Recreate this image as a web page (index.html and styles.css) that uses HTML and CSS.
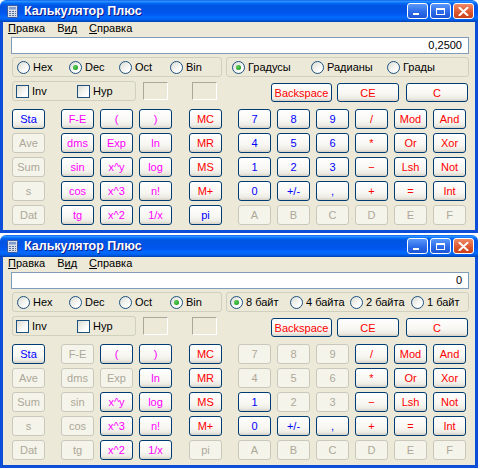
FILE: index.html
```html
<!DOCTYPE html>
<html>
<head>
<meta charset="utf-8">
<link rel="stylesheet" href="styles.css">
</head>
<body>
<div class="win">
  <div class="title">
    <svg class="appicon" width="11" height="13" viewBox="0 0 11 13"><rect x="0.5" y="0.5" width="10" height="12" rx="1" fill="#D8DEEA" stroke="#3A5A9A"/><rect x="2" y="2" width="7" height="2.5" fill="#7F9ACC"/><g fill="#5A6E9A"><rect x="2" y="6" width="2" height="1"/><rect x="5" y="6" width="2" height="1"/><rect x="8" y="6" width="1" height="1"/><rect x="2" y="8" width="2" height="1"/><rect x="5" y="8" width="2" height="1"/><rect x="8" y="8" width="1" height="1"/><rect x="2" y="10" width="2" height="1"/><rect x="5" y="10" width="2" height="1"/><rect x="8" y="10" width="1" height="1"/></g></svg>
    <span class="ttext">Калькулятор Плюс</span>
    <div class="tbtns">
      <span class="tb min"><i></i></span>
      <span class="tb max"><i></i></span>
      <span class="tb close"><svg width="11" height="9" viewBox="0 0 11 9"><path d="M1.5 0.8 L9.5 8.2 M9.5 0.8 L1.5 8.2" stroke="#fff" stroke-width="2" stroke-linecap="round"/></svg></span>
    </div>
  </div>
  <div class="body">
    <div class="menu"><span><u>П</u>равка</span><span>В<u>и</u>д</span><span><u>С</u>правка</span></div>
    <div class="display">0,2500</div>
    <div class="row1">
      <div class="gbox base">
        <span class="radio w52"><i class="rb"></i>Hex</span>
        <span class="radio w50"><i class="rb on"></i>Dec</span>
        <span class="radio w51"><i class="rb"></i>Oct</span>
        <span class="radio"><i class="rb"></i>Bin</span>
      </div>
      <div class="gbox angle">
        <span class="radio w79"><i class="rb on"></i>Градусы</span>
        <span class="radio w76"><i class="rb"></i>Радианы</span>
        <span class="radio"><i class="rb"></i>Грады</span>
      </div>
    </div>
    <div class="row2">
      <div class="gbox invhyp">
        <span class="chk w61"><i class="cb"></i>Inv</span>
        <span class="chk"><i class="cb"></i>Hyp</span>
      </div>
      <span class="sunk s1"></span>
      <span class="sunk s2"></span>
      <div class="k r bksp">Backspace</div>
      <div class="k r ce">CE</div>
      <div class="k r cc">C</div>
    </div>
    <div class="keys">
      <div class="g g1">
        <div class="k b">Sta</div>
        <div class="k d">Ave</div>
        <div class="k d">Sum</div>
        <div class="k d">s</div>
        <div class="k d">Dat</div>
      </div>
      <div class="g g2">
        <div class="k m">F-E</div><div class="k m">(</div><div class="k m">)</div>
        <div class="k m">dms</div><div class="k m">Exp</div><div class="k m">ln</div>
        <div class="k m">sin</div><div class="k m">x^y</div><div class="k m">log</div>
        <div class="k m">cos</div><div class="k m">x^3</div><div class="k m">n!</div>
        <div class="k m">tg</div><div class="k m">x^2</div><div class="k m">1/x</div>
      </div>
      <div class="g g3">
        <div class="k r">MC</div>
        <div class="k r">MR</div>
        <div class="k r">MS</div>
        <div class="k r">M+</div>
        <div class="k b">pi</div>
      </div>
      <div class="g g4">
        <div class="k b">7</div><div class="k b">8</div><div class="k b">9</div><div class="k r">/</div><div class="k r">Mod</div><div class="k r">And</div>
        <div class="k b">4</div><div class="k b">5</div><div class="k b">6</div><div class="k r">*</div><div class="k r">Or</div><div class="k r">Xor</div>
        <div class="k b">1</div><div class="k b">2</div><div class="k b">3</div><div class="k r">−</div><div class="k r">Lsh</div><div class="k r">Not</div>
        <div class="k b">0</div><div class="k b">+/-</div><div class="k b">,</div><div class="k r">+</div><div class="k r">=</div><div class="k r">Int</div>
        <div class="k d">A</div><div class="k d">B</div><div class="k d">C</div><div class="k d">D</div><div class="k d">E</div><div class="k d">F</div>
      </div>
    </div>
  </div>
</div>

<div class="win win2">
  <div class="title">
    <svg class="appicon" width="11" height="13" viewBox="0 0 11 13"><rect x="0.5" y="0.5" width="10" height="12" rx="1" fill="#D8DEEA" stroke="#3A5A9A"/><rect x="2" y="2" width="7" height="2.5" fill="#7F9ACC"/><g fill="#5A6E9A"><rect x="2" y="6" width="2" height="1"/><rect x="5" y="6" width="2" height="1"/><rect x="8" y="6" width="1" height="1"/><rect x="2" y="8" width="2" height="1"/><rect x="5" y="8" width="2" height="1"/><rect x="8" y="8" width="1" height="1"/><rect x="2" y="10" width="2" height="1"/><rect x="5" y="10" width="2" height="1"/><rect x="8" y="10" width="1" height="1"/></g></svg>
    <span class="ttext">Калькулятор Плюс</span>
    <div class="tbtns">
      <span class="tb min"><i></i></span>
      <span class="tb max"><i></i></span>
      <span class="tb close"><svg width="11" height="9" viewBox="0 0 11 9"><path d="M1.5 0.8 L9.5 8.2 M9.5 0.8 L1.5 8.2" stroke="#fff" stroke-width="2" stroke-linecap="round"/></svg></span>
    </div>
  </div>
  <div class="body">
    <div class="menu"><span><u>П</u>равка</span><span>В<u>и</u>д</span><span><u>С</u>правка</span></div>
    <div class="display">0</div>
    <div class="row1">
      <div class="gbox base">
        <span class="radio w52"><i class="rb"></i>Hex</span>
        <span class="radio w50"><i class="rb"></i>Dec</span>
        <span class="radio w51"><i class="rb"></i>Oct</span>
        <span class="radio"><i class="rb on"></i>Bin</span>
      </div>
      <div class="gbox bytes">
        <span class="radio w60"><i class="rb on"></i>8 байт</span>
        <span class="radio w60"><i class="rb"></i>4 байта</span>
        <span class="radio w61"><i class="rb"></i>2 байта</span>
        <span class="radio"><i class="rb"></i>1 байт</span>
      </div>
    </div>
    <div class="row2">
      <div class="gbox invhyp">
        <span class="chk w61"><i class="cb"></i>Inv</span>
        <span class="chk"><i class="cb"></i>Hyp</span>
      </div>
      <span class="sunk s1"></span>
      <span class="sunk s2"></span>
      <div class="k r bksp">Backspace</div>
      <div class="k r ce">CE</div>
      <div class="k r cc">C</div>
    </div>
    <div class="keys">
      <div class="g g1">
        <div class="k b">Sta</div>
        <div class="k d">Ave</div>
        <div class="k d">Sum</div>
        <div class="k d">s</div>
        <div class="k d">Dat</div>
      </div>
      <div class="g g2">
        <div class="k d">F-E</div><div class="k m">(</div><div class="k m">)</div>
        <div class="k d">dms</div><div class="k d">Exp</div><div class="k m">ln</div>
        <div class="k d">sin</div><div class="k m">x^y</div><div class="k m">log</div>
        <div class="k d">cos</div><div class="k m">x^3</div><div class="k m">n!</div>
        <div class="k d">tg</div><div class="k m">x^2</div><div class="k m">1/x</div>
      </div>
      <div class="g g3">
        <div class="k r">MC</div>
        <div class="k r">MR</div>
        <div class="k r">MS</div>
        <div class="k r">M+</div>
        <div class="k d">pi</div>
      </div>
      <div class="g g4">
        <div class="k d">7</div><div class="k d">8</div><div class="k d">9</div><div class="k r">/</div><div class="k r">Mod</div><div class="k r">And</div>
        <div class="k d">4</div><div class="k d">5</div><div class="k d">6</div><div class="k r">*</div><div class="k r">Or</div><div class="k r">Xor</div>
        <div class="k b">1</div><div class="k d">2</div><div class="k d">3</div><div class="k r">−</div><div class="k r">Lsh</div><div class="k r">Not</div>
        <div class="k b">0</div><div class="k b">+/-</div><div class="k b">,</div><div class="k r">+</div><div class="k r">=</div><div class="k r">Int</div>
        <div class="k d">A</div><div class="k d">B</div><div class="k d">C</div><div class="k d">D</div><div class="k d">E</div><div class="k d">F</div>
      </div>
    </div>
  </div>
</div>
</body>
</html>
```
FILE: styles.css
```css
html, body {
  margin: 0;
  padding: 0;
  background: #ffffff;
}
body {
  font-family: "Liberation Sans", Arial, sans-serif;
  font-size: 11px;
  color: #000;
}
.win {
  width: 478px;
  height: 233px;
  display: flex;
  flex-direction: column;
}
.win2 {
  margin-top: 2px;
}
.title {
  flex: none;
  height: 22px;
  display: flex;
  align-items: center;
  border-radius: 6px 6px 0 0;
  background: linear-gradient(to bottom, #0058EE 0%, #3593FF 5%, #288EFF 8%, #127DFF 11%, #036FFC 14%, #0262EE 18%, #0057E5 24%, #0054E3 30%, #0055EB 56%, #005BF5 66%, #026AFE 78%, #0062EF 88%, #0052D6 94%, #0040AB 100%);
}
.appicon {
  margin-left: 7px;
  flex: none;
}
.ttext {
  margin-left: 6px;
  color: #fff;
  font-weight: bold;
  font-size: 12.5px;
  text-shadow: 1px 1px 0 #0F1A89;
}
.tbtns {
  margin-left: auto;
  margin-right: 4px;
  display: flex;
  gap: 2px;
}
.tb {
  width: 21px;
  height: 16px;
  box-sizing: border-box;
  border: 1px solid #fff;
  border-radius: 3px;
  background: linear-gradient(to bottom, #5A98FA, #2D6CE8 55%, #1C55D6);
  position: relative;
  display: flex;
  align-items: center;
  justify-content: center;
}
.tb.min i {
  position: absolute;
  left: 5px;
  bottom: 3px;
  width: 6px;
  height: 2px;
  background: #fff;
}
.tb.max i {
  width: 9px;
  height: 7px;
  box-sizing: border-box;
  border: 1px solid #fff;
  border-top-width: 2px;
}
.tb.close {
  background: linear-gradient(to bottom, #EE8A67, #DE5A33 55%, #C9401B);
}
.body {
  flex: 1;
  background: #ECE9D8;
  border: 3px solid #0D4ED8;
  border-top: 0;
  display: flex;
  flex-direction: column;
}
.menu {
  height: 12px;
  line-height: 12px;
  display: flex;
  padding-left: 5px;
}
.menu span + span {
  margin-left: 12px;
}
.display {
  margin: 3px 0 0 8px;
  width: 458px;
  height: 17px;
  box-sizing: border-box;
  border: 1px solid #7F9DB9;
  background: #fff;
  text-align: right;
  padding-right: 6px;
  line-height: 15px;
}
.row1 {
  display: flex;
  margin-top: 3px;
  height: 20px;
}
.gbox {
  box-sizing: border-box;
  height: 20px;
  border: 1px solid #D0D0BF;
  border-radius: 3px;
  display: flex;
  align-items: center;
}
.base {
  margin-left: 9px;
  width: 210px;
  padding-left: 4px;
}
.angle {
  margin-left: 4px;
  width: 243px;
  padding-left: 5px;
}
.bytes {
  margin-left: 4px;
  width: 243px;
  padding-left: 3px;
}
.radio, .chk {
  display: flex;
  align-items: center;
  white-space: nowrap;
}
.w50 { width: 50px; }
.w51 { width: 51px; }
.w52 { width: 52px; }
.w60 { width: 60px; }
.w61 { width: 61px; }
.w76 { width: 76px; }
.w79 { width: 79px; }
.rb {
  flex: none;
  width: 13px;
  height: 13px;
  box-sizing: border-box;
  border-radius: 50%;
  border: 1px solid #1C5180;
  background: linear-gradient(135deg, #DCDCD4, #FFFFFF 75%);
  margin-right: 3px;
  display: flex;
  align-items: center;
  justify-content: center;
}
.rb.on::after {
  content: "";
  width: 5px;
  height: 5px;
  border-radius: 50%;
  background: radial-gradient(circle at 40% 40%, #5FD35F, #21A121 70%);
}
.invhyp {
  margin-left: 9px;
  width: 124px;
  padding-left: 3px;
}
.cb {
  flex: none;
  width: 13px;
  height: 13px;
  box-sizing: border-box;
  border: 1px solid #1C5180;
  background: linear-gradient(135deg, #DCDCD4, #FFFFFF 75%);
  margin-right: 3px;
}
.row2 {
  display: flex;
  align-items: flex-start;
  margin-top: 4px;
  height: 21px;
}
.sunk {
  margin-top: 1px;
  width: 25px;
  height: 18px;
  box-sizing: border-box;
  border-top: 1px solid #ACA899;
  border-left: 1px solid #ACA899;
  border-right: 1px solid #FFFFFF;
  border-bottom: 1px solid #FFFFFF;
}
.s1 { margin-left: 7px; }
.s2 { margin-left: 24px; }
.k {
  box-sizing: border-box;
  height: 20px;
  border: 1px solid #003C74;
  border-radius: 3px;
  background: linear-gradient(to bottom, #FFFFFF 0%, #F7F6F1 60%, #ECEBE4 85%, #D6D0C5 100%);
  display: flex;
  align-items: center;
  justify-content: center;
  font-size: 11px;
}
.k.d {
  border-color: #CAC8BB;
  background: #F5F4EA;
  color: #ACA899;
}
.b { color: #0000FF; }
.m { color: #FF00FF; }
.r { color: #FF0000; }
.bksp {
  margin-left: 54px;
  margin-top: 2px;
  width: 61px;
  height: 19px;
}
.ce {
  margin-left: 5px;
  margin-top: 2px;
  width: 62px;
  height: 19px;
}
.cc {
  margin-left: 7px;
  margin-top: 2px;
  width: 62px;
  height: 19px;
}
.keys {
  display: flex;
  margin-top: 7px;
  margin-left: 9px;
}
.g {
  display: grid;
  grid-auto-rows: 20px;
  row-gap: 4px;
  column-gap: 6px;
}
.g1 { grid-template-columns: 33px; }
.g2 { margin-left: 16px; grid-template-columns: repeat(3, 33px); }
.g3 { margin-left: 17px; grid-template-columns: 33px; }
.g4 { margin-left: 16px; grid-template-columns: repeat(6, 33px); }
```
